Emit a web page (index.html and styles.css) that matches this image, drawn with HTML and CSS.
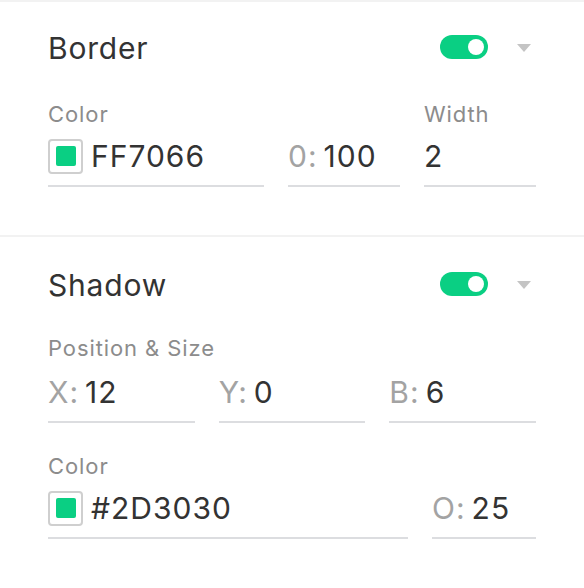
FILE: index.html
```html
<!DOCTYPE html>
<html lang="en">
<head>
  <meta charset="UTF-8">
  <title>Border &amp; Shadow</title>
  <link rel="stylesheet" href="styles.css">
</head>
<body>

<div class="panel">

  <section class="section">
    <div class="section-head">
      <h2 class="section-title">Border</h2>
      <span class="toggle on"><span class="knob"></span></span>
      <span class="caret"></span>
    </div>
    <div class="row first">
      <div class="field w-color">
        <span class="field-label">Color</span>
        <div class="field-input">
          <span class="swatch"><span class="swatch-fill"></span></span>
          <span class="value">FF7066</span>
        </div>
      </div>
      <div class="field w-small">
        <div class="field-input">
          <span class="prefix">0:</span><span class="value">100</span>
        </div>
      </div>
      <div class="field w-small">
        <span class="field-label">Width</span>
        <div class="field-input">
          <span class="value">2</span>
        </div>
      </div>
    </div>
  </section>

  <section class="section">
    <div class="section-head">
      <h2 class="section-title">Shadow</h2>
      <span class="toggle on"><span class="knob"></span></span>
      <span class="caret"></span>
    </div>
    <span class="field-label group-label">Position &amp; Size</span>
    <div class="row">
      <div class="field grow">
        <div class="field-input">
          <span class="prefix">X:</span><span class="value">12</span>
        </div>
      </div>
      <div class="field grow">
        <div class="field-input">
          <span class="prefix">Y:</span><span class="value">0</span>
        </div>
      </div>
      <div class="field grow">
        <div class="field-input">
          <span class="prefix">B:</span><span class="value">6</span>
        </div>
      </div>
    </div>
    <div class="row next">
      <div class="field grow">
        <span class="field-label">Color</span>
        <div class="field-input">
          <span class="swatch"><span class="swatch-fill"></span></span>
          <span class="value">#2D3030</span>
        </div>
      </div>
      <div class="field w-opacity">
        <div class="field-input">
          <span class="prefix">O:</span><span class="value">25</span>
        </div>
      </div>
    </div>
  </section>

</div>

</body>
</html>
```

FILE: styles.css
```css
body {
  margin: 0;
  background: #fff;
  font-family: Inter, "Noto Sans", sans-serif;
  color: #333;
}

.section {
  border-top: 2px solid #f2f2f2;
  padding: 22px 48px 48px;
}
.section + .section { padding-top: 24px; }

.section-head {
  display: flex;
  align-items: center;
  height: 48px;
}
.section-title {
  flex: 1;
  margin: 0;
  font-size: 30px;
  font-weight: 400;
  line-height: 48px;
  letter-spacing: 0.8px;
  color: #333;
}

.toggle {
  position: relative;
  width: 48px;
  height: 24px;
  margin-top: -2px;
  border-radius: 12px;
  background: #d0d0d0;
}
.toggle.on { background: #0acf83; }
.knob {
  position: absolute;
  top: 4px;
  right: 4px;
  width: 16px;
  height: 16px;
  border-radius: 50%;
  background: #fff;
}

.caret {
  width: 24px;
  height: 24px;
  margin-left: 24px;
  display: flex;
  align-items: center;
  justify-content: center;
}
.caret::before {
  content: "";
  border-left: 7px solid transparent;
  border-right: 7px solid transparent;
  border-top: 8px solid #c4c4c4;
}

.row {
  display: flex;
  align-items: flex-end;
  gap: 24px;
}
.row.first { margin-top: 30px; }
.row.next { margin-top: 31px; }

.field { display: flex; flex-direction: column; }
.w-color { width: 216px; }
.w-small { width: 112px; }
.w-opacity { width: 104px; }
.grow { flex: 1; }

.field-label {
  display: block;
  font-size: 22px;
  line-height: 24px;
  letter-spacing: 0.9px;
  color: #8c8c8c;
  margin-bottom: 12px;
}
.group-label {
  margin-top: 27px;
  margin-bottom: 14px;
}

.field-input {
  display: flex;
  align-items: center;
  height: 36px;
  padding-bottom: 11px;
  border-bottom: 2px solid #dcdde0;
  font-size: 30px;
  line-height: 36px;
  letter-spacing: 1px;
  white-space: nowrap;
}
.prefix {
  color: #a3a3a3;
  margin-right: 6px;
}
.value { color: #333; }

.swatch {
  box-sizing: border-box;
  width: 35px;
  height: 35px;
  margin-right: 8px;
  border: 2px solid #cfcfcf;
  border-radius: 4px;
  display: flex;
  align-items: center;
  justify-content: center;
}
.swatch-fill {
  width: 20px;
  height: 20px;
  border-radius: 2px;
  background: #0acf83;
}
```
